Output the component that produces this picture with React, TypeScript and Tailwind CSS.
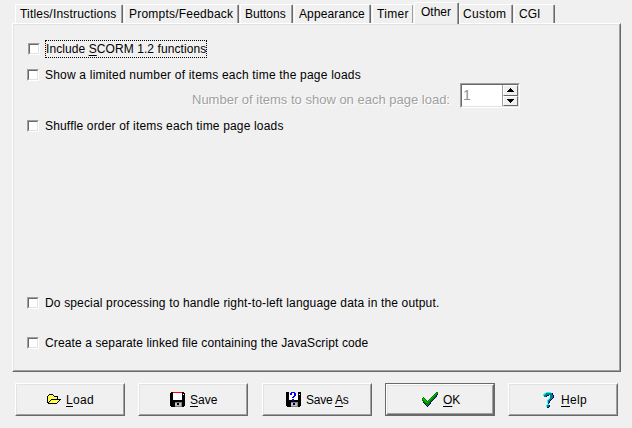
import type { ReactNode } from 'react';

const palette: Record<string, string> = {
  k: '#000000', w: '#ffffff', y: '#ffff00', l: '#ffff9c', r: '#ff0000', g: '#c0c0c0', d: '#808080',
  b: '#0000ff', G: '#008000', L: '#00c000', n: '#000080', t: '#008080', c: '#00ffff',
};

const folder = [
  '..kkkk........',
  '.kylylk.......',
  'kylylylkkkk...',
  'klylylylylk...',
  'kylylylylyk...',
  'klylkkkkkkkkkk',
  'kylkylylylylk.',
  'klkylylylylk..',
  'kkylylylylk...',
  '.kkkkkkkkk....',
];
const disk = [
  '.kkrrrrrrrrrkk.',
  'kkkwwwwwwwwwkkk',
  'kkkwwwwwwwwwkwk',
  'kkkwwwwwwwwwkkk',
  'kkkwwwwwwwwwkkk',
  'kkkwwwwwwwwwkkk',
  'kkkwwwwwwwwwkkk',
  'kkkwwwwwwwwwkkk',
  'kkkkkkkkkkkkkkk',
  'kkkkkkkkkkkkkkk',
  'kkkkkdddddddkkk',
  'kkkkkggkkggdkkk',
  'kkkkkggkkggdkkk',
  'kkkkkggggggdkkk',
  '.kkkkdddddddkk.',
];
const diskQuery = [
  'kkk..bbbb...kkk',
  'kkk.bbwwbb..kkk',
  'kkkwbbwwbbwwkwk',
  'kkkwwwwwbbwwkkk',
  'kkkwwwwbbwwwkkk',
  'kkkwwwbbwwwwkkk',
  'kkkwwwwwwwwwkkk',
  'kkkwwwbbwwwwkkk',
  'kkkkkkbbkkkkkkk',
  'kkkkkkkkkkkkkkk',
  'kkkkkdddddddkkk',
  'kkkkkggkkggdkkk',
  'kkkkkggkkggdkkk',
  'kkkkkggggggdkkk',
  '.kkkkdddddddkk.',
];
const check = [
  '..............GG',
  '.............GLG',
  '............GLGn',
  '...........GLGn.',
  '..........GLGGn.',
  '.G.......GLGGn..',
  'GLG.....GLGGn...',
  'GLLG...GLGGn....',
  'GGLLG.GLGGn.....',
  '.GGLLGLGGn......',
  '.nGGLLGGn.......',
  '..nGGGGGn.......',
  '...nGGGn........',
  '....nGn.........',
  '.....n..........',
];
const question = [
  '...ccccc...',
  '.ccttttttn.',
  'cctttttttn.',
  'ctttnn.tttn',
  '.ttn...tttn',
  '.......tttn',
  '......cttn.',
  '.....cttn..',
  '....cttn...',
  '....ctn....',
  '....ctn....',
  '.....n.....',
  '....cc.....',
  '...cttn....',
  '...cttn....',
  '....nn.....',
];

function PixelIcon({ rows, className }: { rows: string[]; className: string }) {
  const width = rows[0].length;
  return (
    <svg className={`absolute ${className}`} width={width} height={rows.length} viewBox={`0 0 ${width} ${rows.length}`} shapeRendering="crispEdges">
      {rows.flatMap((row, y) =>
        [...row].map((ch, x) => ch === '.' ? null : <rect key={`${x}-${y}`} x={x} y={y} width="1" height="1" fill={palette[ch]} />),
      )}
    </svg>
  );
}

function Key({ children }: { children: ReactNode }) {
  return <span className="underline decoration-1 underline-offset-2">{children}</span>;
}

const raised = 'border border-t-white border-l-white border-r-[#696969] border-b-[#696969]';
const inner = 'border border-t-[#e3e3e3] border-l-[#e3e3e3] border-r-[#a0a0a0] border-b-[#a0a0a0]';

function Tab({ label, className, pad = 'pl-[4px]' }: { label: string; className: string; pad?: string }) {
  return (
    <div className={`h-[19px] shrink-0 rounded-t-[2px] border-t border-l border-r border-t-white border-l-white border-r-[#696969] ${className}`}>
      <div className={`h-full border-r border-[#a0a0a0] pt-[2px] leading-[14px] whitespace-nowrap ${pad}`}>{label}</div>
    </div>
  );
}

function Check({ children, className = '' }: { children: ReactNode; className?: string }) {
  return (
    <div className={`flex h-[16px] items-center ${className}`}>
      <span className="h-[12px] w-[12px] shrink-0 border border-t-[#a0a0a0] border-r-white border-b-white border-l-[#a0a0a0]">
        <span className="block h-full w-full border border-t-[#696969] border-r-[#e3e3e3] border-b-[#e3e3e3] border-l-[#696969] bg-white" />
      </span>
      {children}
    </div>
  );
}

function Button({ rows, icon, text, children, primary = false }: { rows: string[]; icon: string; text: string; children: ReactNode; primary?: boolean }) {
  return (
    <button className={`relative h-[33px] w-[110px] shrink-0 text-left ${primary ? 'border border-[#696969]' : ''}`}>
      <span className={`block h-full w-full ${raised}`}>
        <span className={`block h-full w-full ${inner}`} />
      </span>
      <PixelIcon rows={rows} className={icon} />
      <span className={`absolute leading-[14px] whitespace-nowrap ${text}`}>{children}</span>
    </button>
  );
}

export default function App() {
  return (
    <main className="h-[428px] w-[632px] overflow-hidden bg-[#f0f0f0] font-['Liberation_Sans',Arial,sans-serif] text-[12px] text-black">
      <div className="relative z-10 flex h-[24px] items-end pb-px pl-[15px]">
        <Tab label="Titles/Instructions" className="w-[108px] tracking-[0.19px]" />
        <Tab label="Prompts/Feedback" className="ml-px w-[115px] tracking-[0.22px]" />
        <Tab label="Buttons" className="ml-px w-[53px]" />
        <Tab label="Appearance" className="ml-px w-[77px] tracking-[0.12px]" />
        <Tab label="Timer" className="ml-px w-[42px] border-r-transparent tracking-[0.3px]" />
        <div className="-mb-px h-[22px] w-[45px] shrink-0 rounded-t-[2px] border-t border-r border-l border-t-white border-r-[#696969] border-l-white bg-[#f0f0f0]">
          <div className="h-full border-r border-[#a0a0a0] pt-[2px] pl-[6px] leading-[14px]">Other</div>
        </div>
        <Tab label="Custom" pad="pl-[3px]" className="w-[54px] border-l-transparent tracking-[0.35px]" />
        <Tab label="CGI" className="ml-px w-[41px]" />
      </div>
      <section className={`-mt-px ml-[12px] h-[349px] w-[609px] ${raised}`}>
        <div className={`h-full w-full pl-[13px] ${inner}`}>
          <Check className="mt-[16px] ml-px">
            <span className="ml-[5px] h-[18px] w-[162px] border border-dotted border-black leading-[16px] tracking-[0.08px] whitespace-nowrap">Include <Key>S</Key>CORM 1.2 functions</span>
          </Check>
          <Check className="mt-[10px]"><span className="ml-[6px] tracking-[0.2px]">Show a limited number of items each time the page loads</span></Check>
          <div className="flex h-[26px] pl-[165px]">
            <span className="mt-[9px] w-[268px] text-[13px] leading-[16px] whitespace-nowrap text-[#a0a0a0] [text-shadow:1px_1px_0_white]">Number of items to show on each page load:</span>
            <div className="h-[25px] w-[60px] border border-t-[#a0a0a0] border-r-white border-b-white border-l-[#a0a0a0]">
              <div className="flex h-full border border-t-[#696969] border-r-[#e3e3e3] border-b-[#e3e3e3] border-l-[#696969] bg-white">
                <span className="w-[40px] pl-px text-[14px] leading-[20px] text-[#909090]">1</span>
                <span className="flex w-[16px] flex-col border-l border-[#a0a0a0] bg-[#f0f0f0]">
                  {[0, 1].map((i) => (
                    <span key={i} className={`flex min-h-0 flex-1 items-center justify-center ${raised}`}>
                      <svg width="7" height="4" viewBox="0 0 7 4" shapeRendering="crispEdges"><path d={i ? 'M0 0h7v1H6v1H5v1H4v1H3V3H2V2H1V1H0z' : 'M3 0h1v1h1v1h1v1h1v1H0V3h1V2h1V1h1z'} /></svg>
                    </span>
                  ))}
                </span>
              </div>
            </div>
          </div>
          <Check className="mt-[9px]"><span className="ml-[6px] tracking-[0.17px]">Shuffle order of items each time page loads</span></Check>
          <Check className="mt-[161px]"><span className="ml-[6px] tracking-[0.155px]">Do special processing to handle right-to-left language data in the output.</span></Check>
          <Check className="mt-[24px]"><span className="ml-[6px] tracking-[0.12px]">Create a separate linked file containing the JavaScript code</span></Check>
        </div>
      </section>
      <div className="mt-[11px] flex pl-[15px]">
        <Button rows={folder} icon="left-[32px] top-[11px]" text="left-[51px] top-[10px] tracking-[0.3px]"><Key>L</Key>oad</Button>
        <div className="ml-[13px]"><Button rows={disk} icon="left-[32px] top-[9px]" text="left-[52px] top-[10px]"><Key>S</Key>ave</Button></div>
        <div className="ml-[14px]"><Button rows={diskQuery} icon="left-[24px] top-[9px]" text="left-[44px] top-[10px] tracking-[-0.2px]">Save <Key>A</Key>s</Button></div>
        <div className="ml-[13px]"><Button primary rows={check} icon="left-[36px] top-[8px]" text="left-[57px] top-[9px]"><Key>O</Key>K</Button></div>
        <div className="ml-[13px]"><Button rows={question} icon="left-[35px] top-[9px]" text="left-[53px] top-[10px] tracking-[0.3px]"><Key>H</Key>elp</Button></div>
      </div>
    </main>
  );
}
